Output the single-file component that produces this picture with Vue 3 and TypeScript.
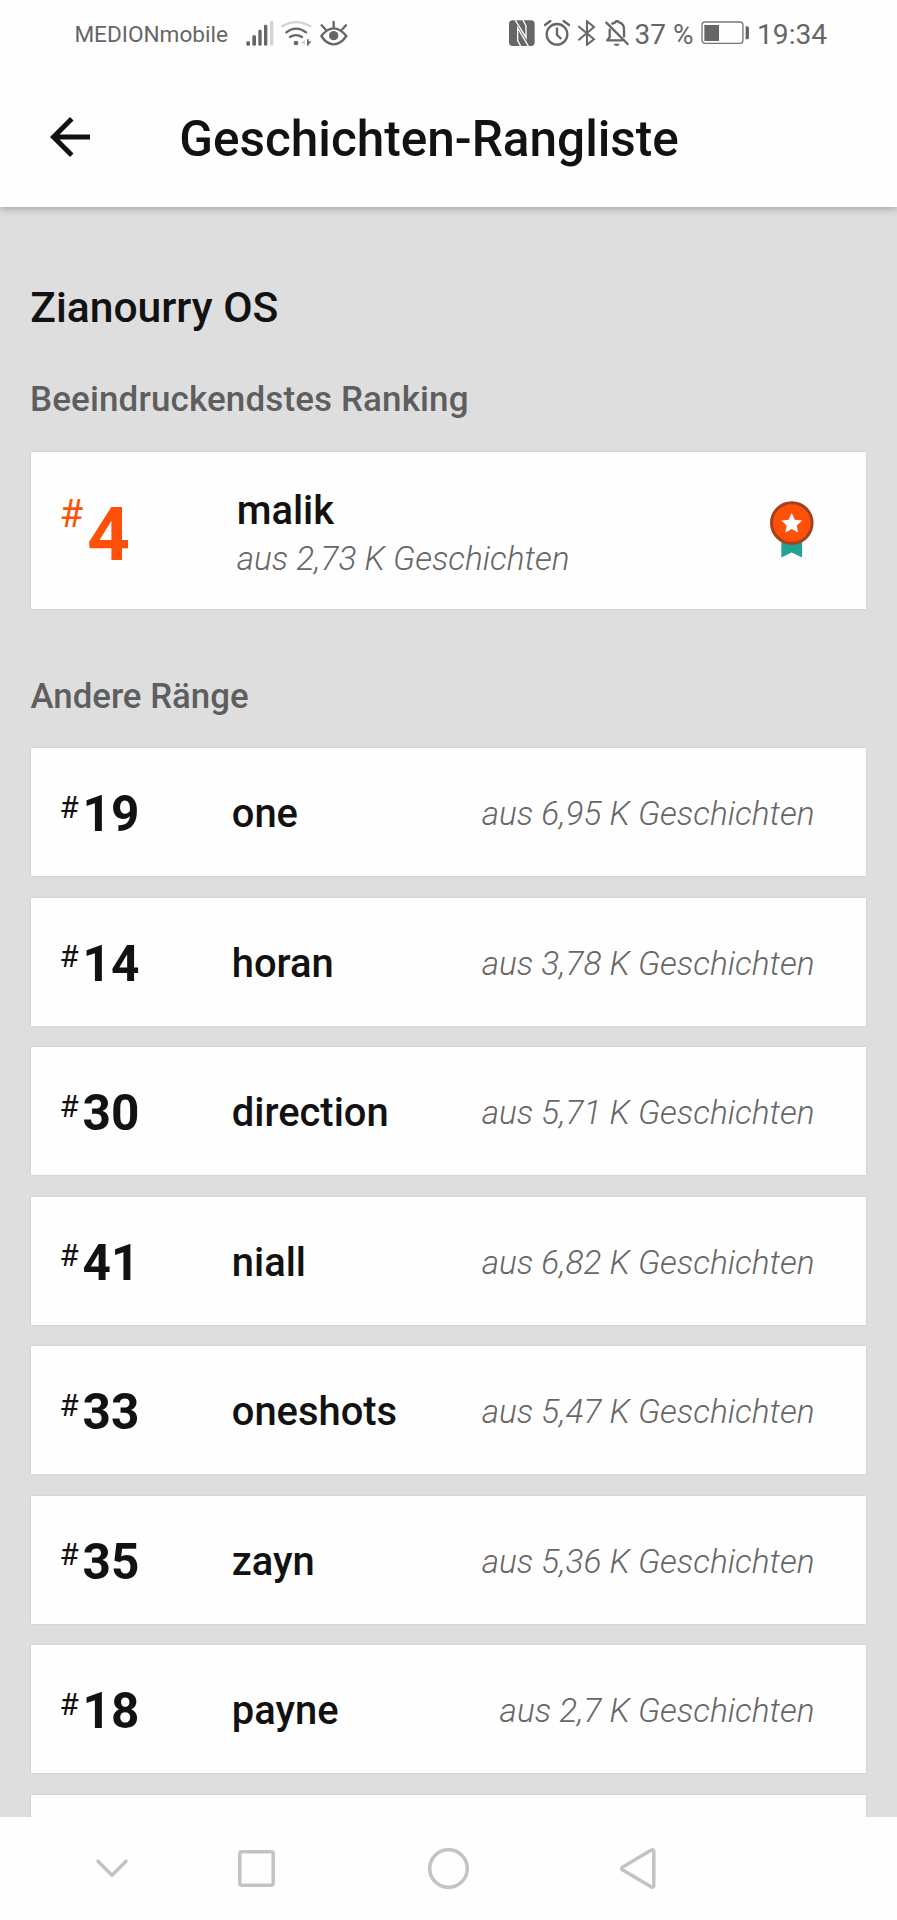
<script setup lang="ts">
interface Rank {
  position: number
  tag: string
  total: string
}

const best: Rank = { position: 4, tag: 'malik', total: '2,73 K' }

const others: Rank[] = [
  { position: 19, tag: 'one', total: '6,95 K' },
  { position: 14, tag: 'horan', total: '3,78 K' },
  { position: 30, tag: 'direction', total: '5,71 K' },
  { position: 41, tag: 'niall', total: '6,82 K' },
  { position: 33, tag: 'oneshots', total: '5,47 K' },
  { position: 35, tag: 'zayn', total: '5,36 K' },
  { position: 18, tag: 'payne', total: '2,7 K' },
]
</script>

<template>
  <div class="screen">
    <div class="status">
      <span class="carrier">MEDIONmobile</span>
      <svg class="signal" viewBox="558 30 84 78" width="28" height="26">
        <rect x="559" y="94" width="11" height="13" rx="4" />
        <rect x="577" y="76" width="11" height="31" rx="4" />
        <rect x="595" y="59" width="10" height="48" rx="4" />
        <rect x="612" y="44" width="10" height="63" rx="4" />
        <rect class="faint" x="630" y="32" width="10" height="75" rx="4" />
      </svg>
      <svg class="wifi" viewBox="663 30 93 78" width="31" height="26">
        <path class="line faint-line" d="M667 49Q708 24 751 49" />
        <path class="line" d="M679 67Q708 45 738 67" />
        <path class="line" d="M690 81Q708 70 726 81" />
        <circle cx="708" cy="99" r="7" />
        <path class="faint" d="M735 90v15l-13-7z" />
        <path d="M741 88h5v6l9 1-9 8v4h-5z" />
      </svg>
      <svg class="eye" viewBox="779 30 84 78" width="28" height="26">
        <path class="line" d="M783 78Q801 55 820 55T858 78Q841 103 820 103T783 78ZM820 36v18M784 46l11 12M857 46l-11 12" />
        <circle cx="820" cy="77" r="14" />
      </svg>
      <span class="fill"></span>
      <svg class="nfc" viewBox="56 30 78 78" width="26" height="26">
        <rect x="56" y="31" width="77" height="77" rx="11" />
        <path class="cut" d="M74 29L107 83V47L97 29M115 110L82 54V92L92 110" />
      </svg>
      <svg class="alarm" viewBox="161 30 78 78" width="26" height="26">
        <circle class="line" cx="200" cy="73" r="31" />
        <path class="line" d="M200 55V75L211 85M164 45L180 33M236 45L220 33" />
      </svg>
      <svg class="bluetooth" viewBox="264 30 54 78" width="18" height="26">
        <path class="line bt" d="M267 50L312 88L291 104V34L312 51L267 89" />
      </svg>
      <svg class="bell" viewBox="345 30 72 78" width="24" height="26">
        <path class="line" d="M349 38L413 102M359 59V82L352 91H395M367 41Q373 38 376 37Q381 29 387 37Q402 41 402 57V79" />
        <path d="M371 101H389Q387 108 380 108T371 101Z" />
      </svg>
      <span class="percent">37 %</span>
      <svg class="battery" viewBox="633 35 145 70" width="48.3" height="23.3">
        <rect class="case" x="636" y="38" width="123" height="64" rx="9" />
        <rect x="643" y="47" width="44" height="48" />
        <path d="M767 51h5q5 0 5 5v29q0 5-5 5h-5z" />
      </svg>
      <span class="clock">19:34</span>
    </div>

    <header class="appbar">
      <svg class="back" viewBox="0 0 24 24" width="60" height="60">
        <path d="M20 11H7.83l5.59-5.59L12 4l-8 8 8 8 1.41-1.41L7.83 13H20v-2z" />
      </svg>
      <h1>Geschichten-Rangliste</h1>
    </header>

    <main class="content">
      <h2 class="story">Zianourry OS</h2>
      <h3 class="section wide">Beeindruckendstes Ranking</h3>
      <section class="card best">
        <div class="rank"><span class="hash">#</span><b>{{ best.position }}</b></div>
        <div class="info">
          <div class="tag">{{ best.tag }}</div>
          <div class="total">aus {{ best.total }} Geschichten</div>
        </div>
        <svg class="badge" viewBox="0 0 44 57" width="44" height="57">
          <path fill="#23a394" d="M11.3 38h20.8v18.6l-10.4-5-10.4 5z" />
          <circle cx="21.8" cy="22" r="20.3" fill="#ff5009" stroke="#a4411c" stroke-width="3" />
          <path fill="#fff" d="M21.7 12l3.1 6.7 7.4.8-5.5 5 1.5 7.3-6.5-3.7-6.5 3.7 1.5-7.3-5.5-5 7.4-.8z" />
        </svg>
      </section>

      <h3 class="section second">Andere Ränge</h3>
      <section class="list">
        <article v-for="item in others" :key="item.tag" class="card row">
          <div class="rank"><span class="hash">#</span><b>{{ item.position }}</b></div>
          <div class="tag">{{ item.tag }}</div>
          <div class="total">aus {{ item.total }} Geschichten</div>
        </article>
        <article class="card row"></article>
      </section>
    </main>

    <nav class="navbar">
      <svg class="hide" viewBox="0 0 32 20" width="32" height="20">
        <path d="M2 2.2l14 14 14-14" />
      </svg>
      <svg class="recent" viewBox="0 0 37 37" width="37" height="37">
        <rect x="1.8" y="1.8" width="33.4" height="33.4" rx="2" />
      </svg>
      <svg class="home" viewBox="0 0 41 41" width="41" height="41">
        <circle cx="20.5" cy="20.5" r="18.8" />
      </svg>
      <svg class="prev" viewBox="0 0 36 41" width="36" height="41">
        <path d="M2.4 19.2L31.4 2q2.4-.8 2.4 1.8v33.4q0 2.6-2.4 1.8L2.4 21.8q-1.2-1.3 0-2.6z" />
      </svg>
    </nav>
  </div>
</template>

<style>
body {
  margin: 0;
  background: #fefefe;
}
</style>

<style scoped>
.screen {
  display: flex;
  flex-direction: column;
  width: 897px;
  height: 1920px;
  overflow: hidden;
  background: #fefefe;
  color: #121212;
  font-family: Roboto, "Noto Sans", sans-serif;
}
svg {
  display: block;
  flex: none;
}
h1,
h2,
h3 {
  margin: 0;
  font-weight: 500;
}

.status {
  display: flex;
  align-items: center;
  flex: none;
  box-sizing: border-box;
  height: 66px;
  padding: 0 70px 0 74.4px;
  color: #666;
  fill: #666;
  white-space: nowrap;
}
.status span {
  line-height: 32px;
  padding-top: 3px;
}
.status .line {
  fill: none;
  stroke: #666;
  stroke-width: 7;
  stroke-linecap: round;
  stroke-linejoin: round;
}
.status .faint {
  fill: #d4d4d4;
}
.status .faint-line {
  stroke: #d4d4d4;
}
.carrier {
  width: 171.6px;
  font-size: 22.6px;
}
.wifi {
  margin-left: 7px;
}
.eye {
  margin-left: 7.7px;
}
.fill {
  flex: 1;
}
.nfc .cut {
  fill: none;
  stroke: #fefefe;
  stroke-width: 4;
}
.alarm {
  margin-left: 9px;
}
.bluetooth {
  margin-left: 8.3px;
}
.status .bt {
  stroke-width: 6;
  stroke-linejoin: miter;
}
.bell {
  margin-left: 9px;
}
.percent {
  width: 66.5px;
  margin-left: 5.5px;
  font-size: 28px;
}
.battery .case {
  fill: none;
  stroke: #777;
  stroke-width: 4;
}
.clock {
  width: 70px;
  margin-left: 7.7px;
  font-size: 28.2px;
}

.appbar {
  display: flex;
  align-items: center;
  flex: none;
  position: relative;
  box-sizing: border-box;
  height: 141px;
  padding-left: 40px;
  box-shadow: 0 2px 8px rgba(0, 0, 0, 0.26);
  clip-path: inset(0 0 -14px 0);
  background: #fefefe;
}
.back {
  fill: #121212;
}
h1 {
  margin-left: 79.3px;
  padding-top: 4px;
  font-size: 49.5px;
  line-height: 60px;
}

.content {
  flex: 1;
  min-height: 0;
  overflow: hidden;
  padding: 75px 31px 0;
  background: #dedede;
}
.story {
  margin-left: -0.8px;
  font-size: 42.6px;
  line-height: 50px;
}
.section {
  color: #5e5e5e;
  font-size: 35px;
  line-height: 42px;
}
.wide {
  margin: 47px 0 31px -1px;
  letter-spacing: 0.12px;
}
.second {
  margin: 66px 0 31px -0.5px;
  font-size: 34.8px;
}

.card {
  display: flex;
  align-items: flex-start;
  box-sizing: border-box;
  padding-left: 28.4px;
  background: #fefefe;
  box-shadow: 0 0 2px rgba(0, 0, 0, 0.14);
}
.rank {
  display: flex;
  align-items: flex-start;
}
.hash {
  font-weight: 400;
}
.rank b {
  font-weight: 700;
}
.tag {
  font-size: 39.9px;
  font-weight: 500;
}
.total {
  color: #666;
  font-size: 33.4px;
  font-style: italic;
  font-weight: 300;
  white-space: nowrap;
}

.best {
  height: 157px;
}
.best .rank {
  width: 177.3px;
  color: #ff500a;
}
.best .hash {
  margin-top: 43px;
  font-size: 38.5px;
  line-height: 38.5px;
}
.best b {
  margin: 44px 0 0 4px;
  font-size: 75px;
  line-height: 76px;
}
.info {
  flex: 1;
  padding-top: 35px;
}
.best .tag {
  line-height: 48px;
}
.best .total {
  margin-top: 4px;
  line-height: 40px;
}
.badge {
  margin: 49px 52px 0 0;
}

.list {
  display: flex;
  flex-direction: column;
  gap: 21.5px;
}
.row {
  height: 128px;
  flex: none;
}
.row .rank {
  width: 172.4px;
}
.row .hash {
  margin-top: 43.5px;
  font-size: 31.2px;
  line-height: 32px;
}
.row b {
  margin: 41.4px 0 0 4px;
  font-size: 49.5px;
  line-height: 50px;
}
.row .tag {
  flex: 1;
  margin-top: 41px;
  line-height: 50px;
}
.row .total {
  margin: 41px 51.5px 0 0;
  line-height: 50px;
}

.navbar {
  display: flex;
  align-items: center;
  flex: none;
  height: 103px;
  padding-left: 96px;
  background: #fefefe;
  fill: none;
  stroke: #c3c3c3;
  stroke-width: 3.5;
  stroke-linecap: round;
  stroke-linejoin: round;
}
.recent {
  margin-left: 110.2px;
}
.home {
  margin-left: 152.8px;
}
.prev {
  margin-left: 151.5px;
}
</style>
